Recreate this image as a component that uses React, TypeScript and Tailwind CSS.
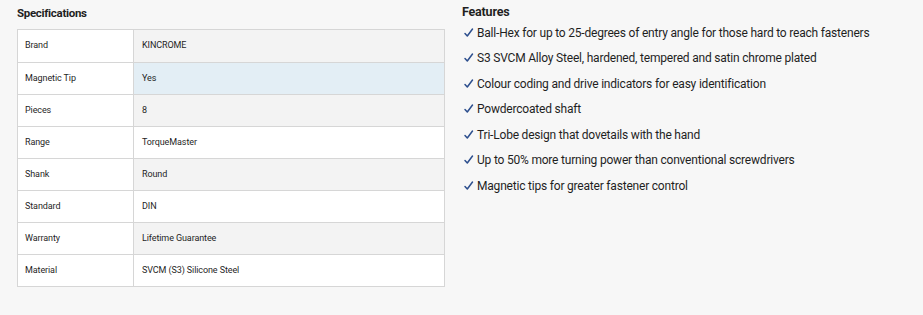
import React from "react";

const specs: [string, string][] = [
  ["Brand", "KINCROME"],
  ["Magnetic Tip", "Yes"],
  ["Pieces", "8"],
  ["Range", "TorqueMaster"],
  ["Shank", "Round"],
  ["Standard", "DIN"],
  ["Warranty", "Lifetime Guarantee"],
  ["Material", "SVCM (S3) Silicone Steel"],
];

const features = [
  "Ball-Hex for up to 25-degrees of entry angle for those hard to reach fasteners",
  "S3 SVCM Alloy Steel, hardened, tempered and satin chrome plated",
  "Colour coding and drive indicators for easy identification",
  "Powdercoated shaft",
  "Tri-Lobe design that dovetails with the hand",
  "Up to 50% more turning power than conventional screwdrivers",
  "Magnetic tips for greater fastener control",
];

export default function App() {
  return (
    <div className="w-[923px] h-[315px] bg-[#f7f7f7] text-[#1f1f1f] font-['Roboto',sans-serif] flex">
      <div className="w-[445px] pl-[17px] pt-[6px]">
        <h2 className="text-[11.5px] font-bold h-[23px] leading-[14px] tracking-[-0.3px]">Specifications</h2>
        <div className="border border-[#d6d6d6] bg-white">
          {specs.map(([k, v], i) => {
            const valBg = i === 1 ? "bg-[#e3eef5]" : i % 2 === 0 ? "bg-[#f3f3f3]" : "bg-white";
            return (
              <div key={k} className={`flex h-[32px] text-[9px] tracking-[-0.1px] ${i > 0 ? "border-t border-[#d6d6d6]" : ""}`}>
                <div className="w-[116px] bg-white border-r border-[#d6d6d6] flex items-center pl-[7px]">{k}</div>
                <div className={`flex-1 ${valBg} flex items-center pl-[8px]`}>{v}</div>
              </div>
            );
          })}
        </div>
      </div>
      <div className="pl-[17px] pt-[5px]">
        <h2 className="text-[12.5px] font-bold leading-[14px] h-[14px] tracking-[-0.2px]">Features</h2>
        <ul className="mt-[1px]">
          {features.map((f) => (
            <li key={f} className="flex items-center h-[25.5px] text-[12px] tracking-[-0.2px]">
              <svg width="15" height="12" viewBox="0 0 15 12" className="shrink-0">
                <path d="M3 6.5 L5.3 9 L10.5 2" fill="none" stroke="#2d4f8e" strokeWidth="1.5" strokeLinecap="round" strokeLinejoin="round" />
              </svg>
              <span>{f}</span>
            </li>
          ))}
        </ul>
      </div>
    </div>
  );
}
